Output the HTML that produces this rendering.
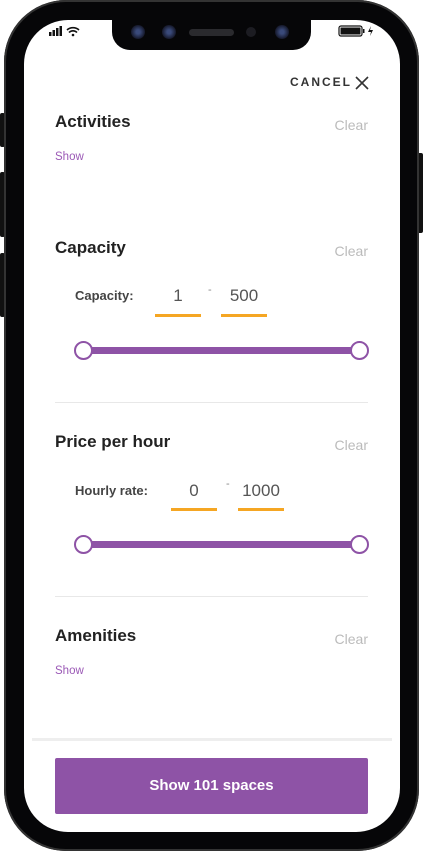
<!DOCTYPE html>
<html><head><style>
*{margin:0;padding:0;box-sizing:border-box}
body{width:423px;height:852px;background:#fff;position:relative;overflow:hidden;font-family:"Liberation Sans",sans-serif}
.a{position:absolute}
.frame{left:4px;top:0;width:415px;height:851px;background:#060608;border-radius:62px;box-shadow:inset 0 0 0 2px #333}
.screen{left:24px;top:20px;width:376px;height:812px;background:#fff;border-radius:44px;overflow:hidden}
.notch{left:112px;top:18px;width:199px;height:32px;background:#060608;border-radius:0 0 18px 18px}
.btn{background:#111}
h2{position:absolute;font-size:17px;font-weight:bold;color:#222;left:55px}
.clear{position:absolute;right:55px;font-size:14px;color:#bbb}
.show{position:absolute;left:55px;font-size:11.5px;color:#9b59b6}
.lbl{position:absolute;font-size:13px;color:#444;font-weight:bold}
.val{position:absolute;font-size:17px;color:#555;text-align:center;width:46px}
.ul{position:absolute;height:3px;width:46px;background:#f5a623}
.track{position:absolute;left:84px;width:275px;height:7px;background:#8e53a6}
.h{position:absolute;width:19px;height:19px;border:2px solid #8e53a6;border-radius:50%;background:#fff}
.hr{position:absolute;left:55px;width:313px;height:1px;background:#e8e8e8}
.cam{position:absolute;width:14px;height:14px;border-radius:50%;background:radial-gradient(circle,#3a4a7a 20%,#15182a 70%)}
</style></head><body>
<div class="a btn" style="left:0;top:113px;width:5px;height:34px;border-radius:2px"></div>
<div class="a btn" style="left:0;top:172px;width:5px;height:65px;border-radius:2px"></div>
<div class="a btn" style="left:0;top:253px;width:5px;height:64px;border-radius:2px"></div>
<div class="a btn" style="left:417px;top:153px;width:6px;height:80px;border-radius:2px"></div>
<div class="a frame"></div>
<div class="a screen"></div>
<div class="a notch"></div>
<div class="cam" style="left:131px;top:25px"></div>
<div class="cam" style="left:162px;top:25px"></div>
<div class="a" style="left:189px;top:29px;width:45px;height:7px;border-radius:4px;background:#2a2a2e"></div>
<div class="a" style="left:246px;top:27px;width:10px;height:10px;border-radius:50%;background:#1c1c22"></div>
<div class="cam" style="left:275px;top:25px"></div>
<svg class="a" style="left:48px;top:25px" width="40" height="12"><rect x="1" y="7" width="2.5" height="4" fill="#111"/><rect x="4.5" y="5" width="2.5" height="6" fill="#111"/><rect x="8" y="3" width="2.5" height="8" fill="#111"/><rect x="11.5" y="1" width="2.5" height="10" fill="#111"/><path d="M19 5a9 9 0 0 1 12 0M21 7.5a5.5 5.5 0 0 1 8 0" stroke="#111" stroke-width="1.6" fill="none"/><circle cx="25" cy="10" r="1.3" fill="#111"/></svg>
<svg class="a" style="left:338px;top:25px" width="40" height="12"><rect x="1" y="1" width="23" height="10" rx="2" stroke="#111" stroke-width="1.2" fill="none"/><rect x="2.5" y="2.5" width="20" height="7" fill="#111"/><rect x="25" y="4" width="1.5" height="4" fill="#111"/><path d="M33 1l-3 6h3l-1 4 3-6h-3z" fill="#111"/></svg>
<div class="a" style="left:290px;top:75px;font-size:12px;font-weight:bold;letter-spacing:2px;color:#333">CANCEL</div>
<svg class="a" style="left:355px;top:76px" width="14" height="14"><path d="M1 1L13 13M13 1L1 13" stroke="#333" stroke-width="1.6"/></svg>

<h2 style="top:112px">Activities</h2><div class="clear" style="top:117px">Clear</div>
<div class="show" style="top:151px">Show</div>

<h2 style="top:238px">Capacity</h2><div class="clear" style="top:243px">Clear</div>
<div class="lbl" style="left:75px;top:288px">Capacity:</div>
<div class="val" style="left:155px;top:286px">1</div>
<div class="a" style="left:208px;top:284px;font-size:11px;color:#888">-</div>
<div class="val" style="left:221px;top:286px">500</div>
<div class="ul" style="left:155px;top:314px"></div><div class="ul" style="left:221px;top:314px"></div>
<div class="track" style="top:347px"></div>
<div class="h" style="left:74px;top:341px"></div><div class="h" style="left:350px;top:341px"></div>
<div class="hr" style="top:402px"></div>

<h2 style="top:432px">Price per hour</h2><div class="clear" style="top:437px">Clear</div>
<div class="lbl" style="left:75px;top:483px">Hourly rate:</div>
<div class="val" style="left:171px;top:481px">0</div>
<div class="a" style="left:226px;top:478px;font-size:11px;color:#888">-</div>
<div class="val" style="left:238px;top:481px">1000</div>
<div class="ul" style="left:171px;top:508px"></div><div class="ul" style="left:238px;top:508px"></div>
<div class="track" style="top:541px"></div>
<div class="h" style="left:74px;top:535px"></div><div class="h" style="left:350px;top:535px"></div>
<div class="hr" style="top:596px"></div>

<h2 style="top:626px">Amenities</h2><div class="clear" style="top:631px">Clear</div>
<div class="show" style="top:665px">Show</div>

<div class="a" style="left:32px;top:738px;width:360px;height:3px;background:#eee"></div>
<div class="a" style="left:55px;top:758px;width:313px;height:56px;background:#8e53a6;border-radius:2px;color:#fff;font-size:15px;font-weight:bold;text-align:center;line-height:56px">Show 101 spaces</div>
</body></html>
